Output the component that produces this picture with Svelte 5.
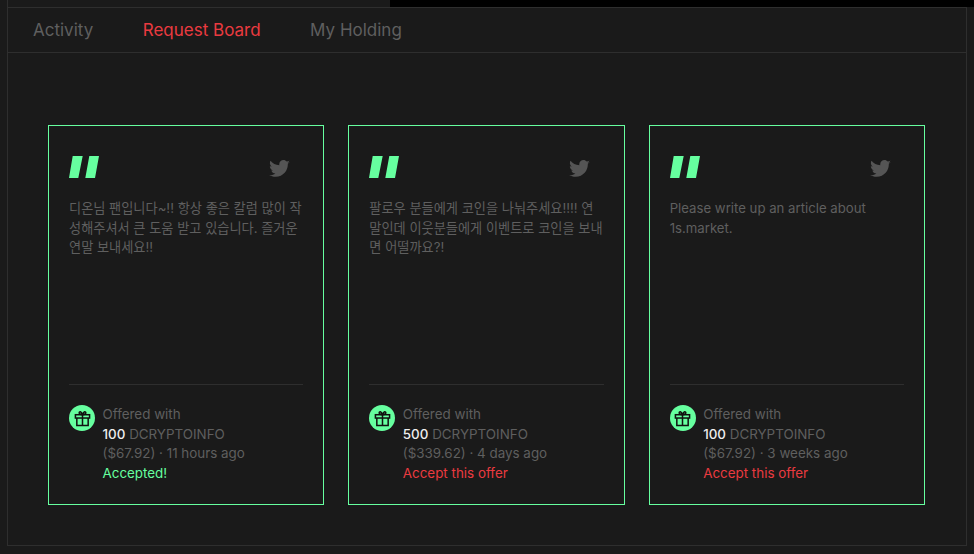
<script>
    const offers = [
        {
            text: '디온님 팬입니다~!! 항상 좋은 칼럼 많이 작성해주셔서 큰 도움 받고 있습니다. 즐거운 연말 보내세요!!',
            amount: 100, usd: '$67.92', time: '11 hours ago', accepted: true
        },
        {
            text: '팔로우 분들에게 코인을 나눠주세요!!!! 연말인데 이웃분들에게 이벤트로 코인을 보내면 어떨까요?!',
            amount: 500, usd: '$339.62', time: '4 days ago', accepted: false
        },
        {
            text: 'Please write up an article about 1s.market.',
            amount: 100, usd: '$67.92', time: '3 weeks ago', accepted: false
        }
    ]
</script>

<div class="page">
    <div class="top">
        <div class="top-left"></div>
        <div class="top-right"></div>
    </div>
    <div class="panel">
        <nav class="tabs">
            <span>Activity</span>
            <span class="active">Request Board</span>
            <span>My Holding</span>
        </nav>
        <main class="board">
            {#each offers as offer}
                <article class="card">
                    <div class="card-head">
                        <svg width="30" height="22" viewBox="0 0 30 22">
                            <path d="M3.700 0h10l-4.400 22H0z M20.300 0H30l-4 22h-9.700z" fill="#66ff9f" />
                        </svg>
                        <svg class="bird" width="21" height="17.500" viewBox="0 0 24 20">
                            <path d="M24 2.400c-.9.400-1.800.7-2.800.8 1-.6 1.800-1.600 2.200-2.700-1 .6-2 1-3.100 1.200C19.300.7 18 0 16.600 0c-2.700 0-4.900 2.200-4.900 4.900 0 .4 0 .8.100 1.100C7.700 5.800 4.100 3.900 1.700.9c-.4.700-.7 1.600-.7 2.500 0 1.700.9 3.200 2.200 4.100-.8 0-1.600-.2-2.200-.6v.1c0 2.400 1.700 4.400 3.900 4.800-.4.100-.8.200-1.300.2-.3 0-.6 0-.9-.1.600 2 2.400 3.400 4.600 3.400-1.700 1.300-3.800 2.100-6.100 2.100-.4 0-.8 0-1.200-.1C2.200 18.300 4.800 19 7.500 19c9.100 0 14-7.500 14-14v-.6c1-.7 1.800-1.600 2.500-2z" fill="#555" />
                        </svg>
                    </div>
                    <p class="message">{offer.text}</p>
                    <div class="offer">
                        <div class="gift">
                            <svg width="17" height="17" viewBox="0 0 18 18" fill="none" stroke="#111" stroke-width="1.600">
                                <rect x="1.500" y="5" width="15" height="3.500" />
                                <path d="M3 8.500V16.500H15V8.500M9 5V16.500" />
                                <path d="M9 5C7 5 5.500 4.500 5.500 3S7.500 1 9 5C10.500 1 12.500 1.500 12.500 3S11 5 9 5Z" />
                            </svg>
                        </div>
                        <div class="details">
                            <div>Offered with</div>
                            <div><b>{offer.amount}</b> DCRYPTOINFO</div>
                            <div>({offer.usd}) · {offer.time}</div>
                            {#if offer.accepted}
                                <div class="accepted">Accepted!</div>
                            {:else}
                                <div class="accept">Accept this offer</div>
                            {/if}
                        </div>
                    </div>
                </article>
            {/each}
        </main>
    </div>
</div>

<style>
    :global(body) {
        background: #1a1a1a;
        font-family: Inter, "Noto Sans CJK KR", sans-serif;
    }

    .page {
        width: 974px;
        height: 554px;
        padding: 0 7px 8px 7px;
        box-sizing: border-box;
        display: flex;
        flex-direction: column;
    }

    .top {
        display: flex;
        height: 7px;
        flex: none;
        margin-right: -7px;
    }

    .top-left {
        flex: none;
        width: 383px;
        border-left: 1px solid #2e2e2e;
        box-sizing: border-box;
    }

    .top-right {
        flex: 1;
        background: #000;
    }

    .panel {
        flex: 1;
        display: flex;
        flex-direction: column;
        border: 1px solid #2e2e2e;
    }

    .tabs {
        display: flex;
        gap: 49.500px;
        height: 44px;
        flex: none;
        align-items: center;
        padding: 0 25px;
        border-bottom: 1px solid #2e2e2e;
        font-size: 17px;
        color: #5f5f5f;
    }

    .active {
        color: #ea3a40;
    }

    .board {
        display: grid;
        grid-template-columns: repeat(3, 1fr);
        gap: 24px;
        padding: 72px 41px 40px 40px;
        flex: 1;
        min-height: 0;
    }

    .card {
        border: 1px solid #66ff9f;
        padding: 30px 20px 21px 20px;
        display: flex;
        flex-direction: column;
        min-width: 0;
    }

    .card-head {
        display: flex;
        justify-content: space-between;
        align-items: flex-end;
        padding-right: 13.500px;
    }

    .bird {
        margin-bottom: 1px;
    }

    .message {
        margin: 21px 0 0;
        font-size: 13.200px;
        line-height: 19.500px;
        color: #5f5f5f;
        flex: 1;
    }

    .offer {
        display: flex;
        gap: 7.500px;
        border-top: 1px solid #2e2e2e;
        padding-top: 20px;
        font-size: 13.400px;
        line-height: 19.500px;
        color: #5f5f5f;
    }

    .gift {
        width: 26px;
        height: 26px;
        border-radius: 50%;
        background: #66ff9f;
        flex: none;
        display: flex;
        align-items: center;
        justify-content: center;
    }

    b {
        color: #eee;
        font-weight: 500;
    }

    .accepted {
        color: #66ff9f;
    }

    .accept {
        color: #ea3a40;
    }
</style>
